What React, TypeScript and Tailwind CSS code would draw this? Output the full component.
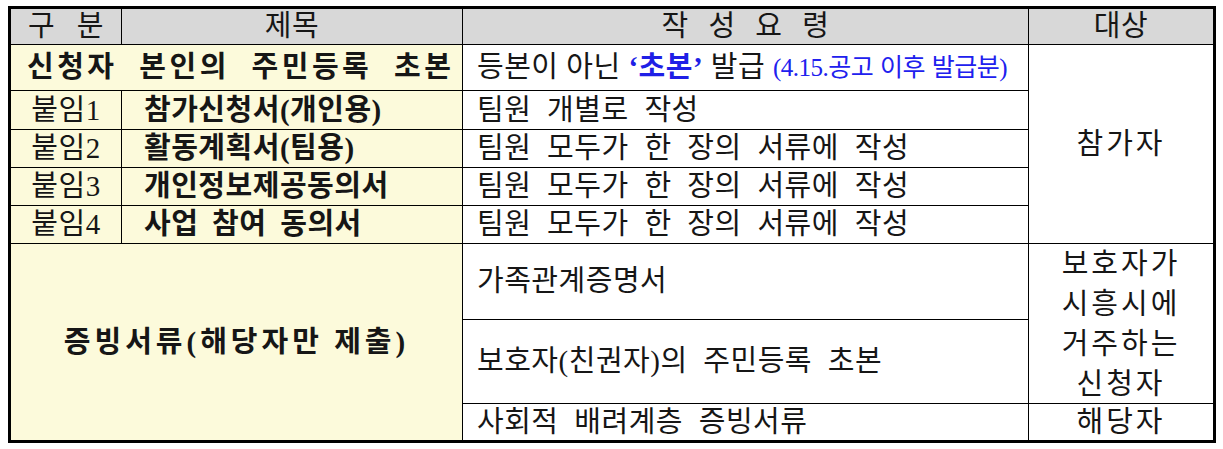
const font = '[font-family:"Liberation_Serif","Noto_Sans_CJK_KR",serif]'

function Cell({
  className = '',
  children,
}: {
  className?: string
  children: React.ReactNode
}) {
  return <div className={`flex items-center ${className}`}>{children}</div>
}

const rows = [
  { tag: '붙임1', title: '참가신청서(개인용)', note: '팀원 개별로 작성' },
  { tag: '붙임2', title: '활동계획서(팀용)', note: '팀원 모두가 한 장의 서류에 작성' },
  { tag: '붙임3', title: '개인정보제공동의서', note: '팀원 모두가 한 장의 서류에 작성' },
  { tag: '붙임4', title: '사업 참여 동의서', note: '팀원 모두가 한 장의 서류에 작성' },
]

export default function App() {
  return (
    <div className="w-[1223px] h-[449px] bg-white pt-[6px] pl-[8px]">
      <div
        className={`w-[1208px] border-[3px] border-black bg-black grid grid-cols-[110px_340px_565px_184px] grid-rows-[35px_45px_38px_37px_37px_37px_75px_83px_36px] gap-px text-[29px] leading-none tracking-[0.5px] text-[#161616] ${font}`}
      >
        {/* header */}
        <Cell className="bg-[#d8d8d8] justify-center [word-spacing:14px]">구 분</Cell>
        <Cell className="bg-[#d8d8d8] justify-center">제목</Cell>
        <Cell className="bg-[#d8d8d8] justify-center [word-spacing:12px]">작 성 요 령</Cell>
        <Cell className="bg-[#d8d8d8] justify-center">대상</Cell>

        {/* row 1 */}
        <Cell className="col-span-2 bg-[#fcfadb] pl-[16px] font-bold whitespace-nowrap tracking-[3.5px] [word-spacing:11px]">
          신청자 본인의 주민등록 초본
        </Cell>
        <Cell className="bg-white pl-[14px] whitespace-pre">
          {'등본이 아닌 '}
          <span className="font-bold text-[#1f1fe6]">‘초본’</span>
          {' 발급 '}
          <span className="text-[25px] text-[#2020ee] tracking-[-0.5px] [word-spacing:1px]">
            (4.15.공고 이후 발급분)
          </span>
        </Cell>
        <Cell className="row-span-5 bg-white justify-center tracking-[3px]">참가자</Cell>

        {/* rows 2-5 */}
        {rows.map((r) => (
          <div key={r.tag} className="contents">
            <Cell className="bg-[#fcfadb] justify-center">{r.tag}</Cell>
            <Cell className="bg-[#fcfadb] pl-[22px] font-bold [word-spacing:6px]">{r.title}</Cell>
            <Cell className="bg-white pl-[14px] [word-spacing:8px]">{r.note}</Cell>
          </div>
        ))}

        {/* evidence block */}
        <Cell className="col-span-2 row-span-3 bg-[#fcfadb] justify-center font-bold tracking-[4px]">
          증빙서류(해당자만 제출)
        </Cell>
        <Cell className="bg-white pl-[14px]">가족관계증명서</Cell>
        <Cell className="row-span-2 bg-white justify-center">
          <div className="flex flex-col items-center gap-[11px] pt-[2px] tracking-[3px]">
            <span>보호자가</span>
            <span>시흥시에</span>
            <span>거주하는</span>
            <span>신청자</span>
          </div>
        </Cell>
        <Cell className="bg-white pl-[14px] [word-spacing:8px]">보호자(친권자)의 주민등록 초본</Cell>
        <Cell className="bg-white pl-[14px] [word-spacing:8px]">사회적 배려계층 증빙서류</Cell>
        <Cell className="bg-white justify-center tracking-[3px]">해당자</Cell>
      </div>
    </div>
  )
}
